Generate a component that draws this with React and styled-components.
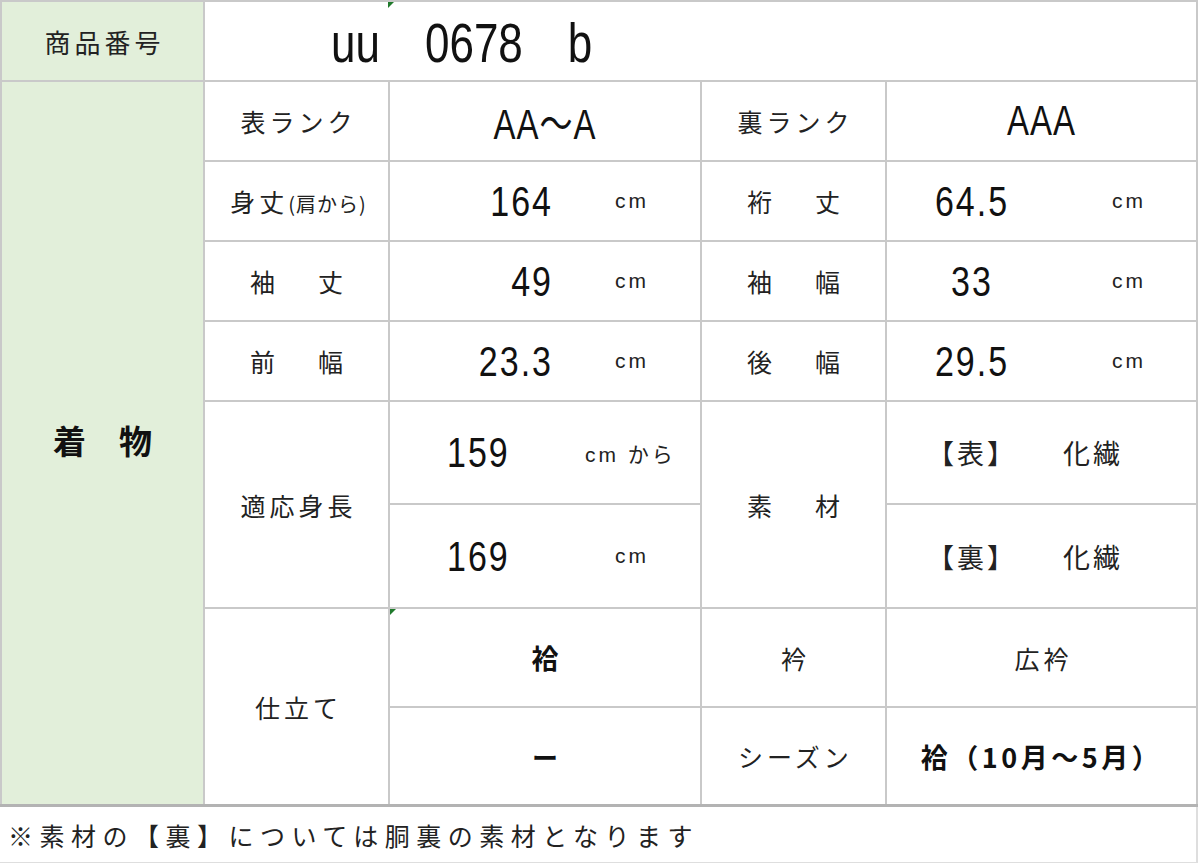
import React from 'react';
import styled, { createGlobalStyle, css } from 'styled-components';

const GlobalStyle = createGlobalStyle`
  body {
    margin: 0;
    background: #ffffff;
    font-family: "Noto Sans CJK JP", "Noto Sans", sans-serif;
    color: #111;
  }
`;

const Page = styled.div`
  width: 1198px;
`;

const Sheet = styled.div`
  display: grid;
  grid-template-columns: 201px 183px 310px 183px 309px;
  grid-template-rows: 78px 78px 78px 78px 78px 101px 102px 97px 96px;
  gap: 2px;
  padding: 2px 2px 0 2px;
  background: #c9c9c9;
  border-bottom: 3px solid #b3b3b3;
`;

const Cell = styled.div`
  position: relative;
  display: flex;
  align-items: center;
  justify-content: ${(p) => p.$justify || 'center'};
  background: ${(p) => (p.$green ? '#e2efda' : '#ffffff')};
  grid-column: span ${(p) => p.$colSpan || 1};
  grid-row: span ${(p) => p.$rowSpan || 1};
  padding-left: ${(p) => p.$pl || 0}px;

  ${(p) =>
    p.$flag !== undefined &&
    css`
      &::before {
        content: '';
        position: absolute;
        top: 0;
        left: ${p.$flag}px;
        width: 0;
        height: 0;
        border-top: 6px solid #207a2c;
        border-right: 6px solid transparent;
      }
    `}
`;

const Label = styled.span`
  font-size: 25px;
  font-weight: 400;
  letter-spacing: ${(p) => (p.$wide ? 9 : 4)}px;
  margin-right: ${(p) => (p.$wide ? -9 : -4)}px;
  color: #222;
  white-space: nowrap;
`;

const Small = styled.span`
  font-size: 20px;
  letter-spacing: 1px;
`;

const HeadLabel = styled.span`
  font-size: 26px;
  letter-spacing: 4px;
  margin-right: -4px;
  color: #222;
`;

const SectionLabel = styled.span`
  font-size: 33px;
  font-weight: 700;
  color: #111;
  margin-bottom: 6px;
`;

// tall, narrow latin like the sheet's gothic half-width glyphs
const tall = css`
  display: inline-block;
  font-family: "Liberation Sans", "Noto Sans CJK JP", sans-serif;
  transform: scaleY(1.27);
  color: #111;
`;

const Code = styled.div`
  ${tall}
  display: flex;
  gap: 45px;
  font-size: 44px;
  margin-top: 4px;
`;

const Value = styled.span`
  ${tall}
  font-size: 33px;
  letter-spacing: 1px;
`;

const Num = styled.span`
  ${tall}
  width: ${(p) => p.$w}px;
  text-align: ${(p) => p.$align || 'left'};
  font-size: 34px;
  letter-spacing: 2px;
`;

const Unit = styled.span`
  margin-left: ${(p) => p.$ml || 0}px;
  font-family: "Liberation Sans", "Noto Sans CJK JP", sans-serif;
  font-size: 21px;
  letter-spacing: 3px;
  color: #222;
`;

const Strong = styled.span`
  font-size: 27px;
  font-weight: 700;
  color: #111;
  letter-spacing: ${(p) => p.$ls || 0}px;
`;

const Material = styled.div`
  display: flex;
  align-items: center;
  gap: 46px;
  font-size: 27px;
  letter-spacing: 3px;
  color: #222;
  margin-left: 40px;
  margin-right: auto;
`;

const Dash = styled.span`
  font-size: 26px;
  font-weight: 700;
  color: #111;
`;

const Footer = styled.div`
  height: 55px;
  display: flex;
  align-items: center;
  padding-left: 8px;
  border-right: 2px solid #dedede;
  border-bottom: 2px solid #dedede;
  font-size: 25px;
  letter-spacing: 6.5px;
  color: #222;
`;

const sizes = [
  ['身丈', '164', 1, '裄　丈', '64.5'],
  ['袖　丈', '49', 0, '袖　幅', '33'],
  ['前　幅', '23.3', 0, '後　幅', '29.5'],
];

export default function App() {
  return (
    <Page>
      <GlobalStyle />
      <Sheet>
        <Cell $green>
          <HeadLabel>商品番号</HeadLabel>
        </Cell>
        <Cell $colSpan={4} $justify="flex-start" $pl={126} $flag={183}>
          <Code>
            <span>uu</span>
            <span>0678</span>
            <span>b</span>
          </Code>
        </Cell>

        <Cell $green $rowSpan={8}>
          <SectionLabel>着　物</SectionLabel>
        </Cell>

        <Cell>
          <Label>表ランク</Label>
        </Cell>
        <Cell>
          <Value>AA～A</Value>
        </Cell>
        <Cell>
          <Label>裏ランク</Label>
        </Cell>
        <Cell>
          <Value>AAA</Value>
        </Cell>

        {sizes.map(([l1, v1, withNote, l2, v2]) => (
          <React.Fragment key={l1}>
            <Cell>
              {withNote ? (
                <Label>
                  {l1}
                  <Small>(肩から)</Small>
                </Label>
              ) : (
                <Label $wide>{l1}</Label>
              )}
            </Cell>
            <Cell $justify="flex-start">
              <Num $w={163} $align="right">
                {v1}
              </Num>
              <Unit $ml={62}>cm</Unit>
            </Cell>
            <Cell>
              <Label $wide>{l2}</Label>
            </Cell>
            <Cell $justify="flex-start">
              <Num $w={170} $align="center">
                {v2}
              </Num>
              <Unit $ml={55}>cm</Unit>
            </Cell>
          </React.Fragment>
        ))}

        <Cell $rowSpan={2}>
          <Label>適応身長</Label>
        </Cell>
        <Cell $justify="flex-start" $pl={57}>
          <Num $w={138}>159</Num>
          <Unit>cm から</Unit>
        </Cell>
        <Cell $rowSpan={2}>
          <Label $wide>素　材</Label>
        </Cell>
        <Cell>
          <Material>
            <span>【表】</span>
            <span>化繊</span>
          </Material>
        </Cell>
        <Cell $justify="flex-start" $pl={57}>
          <Num $w={138}>169</Num>
          <Unit $ml={30}>cm</Unit>
        </Cell>
        <Cell>
          <Material>
            <span>【裏】</span>
            <span>化繊</span>
          </Material>
        </Cell>

        <Cell $rowSpan={2}>
          <Label>仕立て</Label>
        </Cell>
        <Cell $flag={0}>
          <Strong>袷</Strong>
        </Cell>
        <Cell>
          <Label>衿</Label>
        </Cell>
        <Cell>
          <Label>広衿</Label>
        </Cell>
        <Cell>
          <Dash>ー</Dash>
        </Cell>
        <Cell>
          <Label>シーズン</Label>
        </Cell>
        <Cell>
          <Strong $ls={3.5}>袷（10月～5月）</Strong>
        </Cell>
      </Sheet>
      <Footer>※素材の【裏】については胴裏の素材となります</Footer>
    </Page>
  );
}
